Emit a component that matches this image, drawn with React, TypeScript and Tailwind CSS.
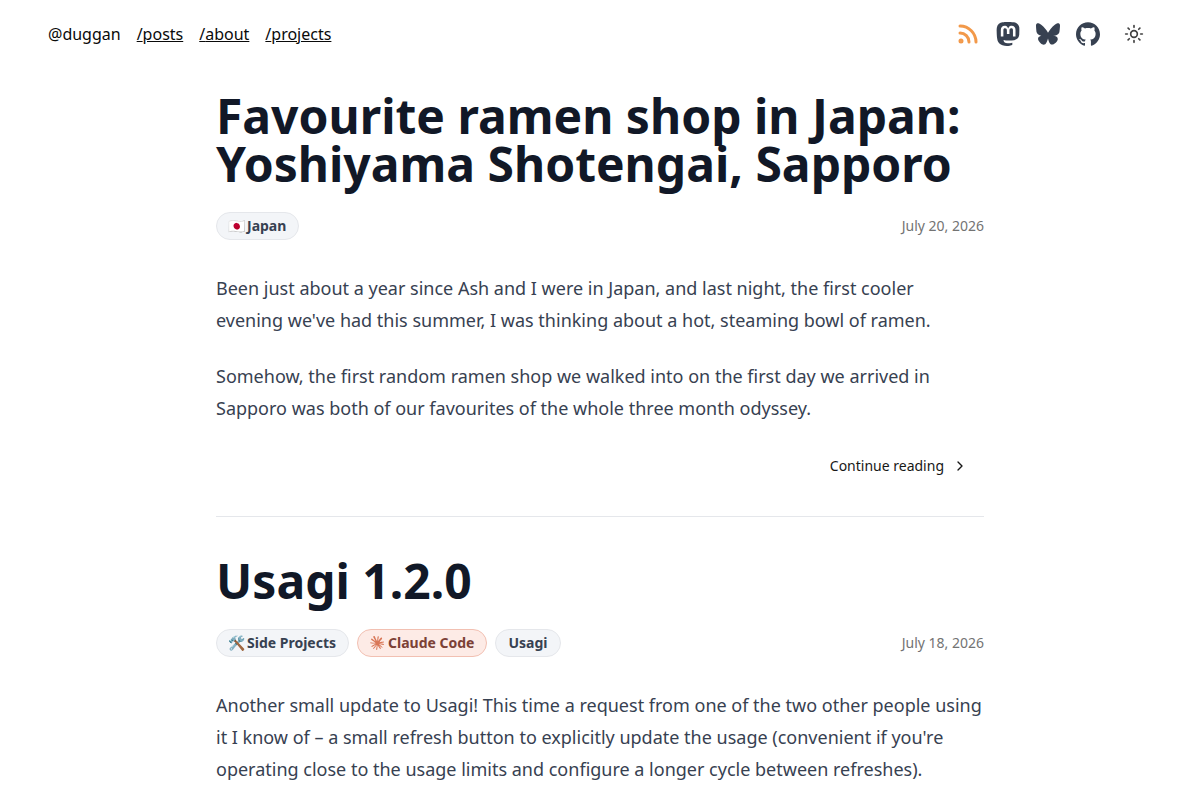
import type { ReactNode } from "react";
import { ChevronRight, Rss, Sun } from "lucide-react";
import { SiBluesky, SiClaude, SiGithub, SiMastodon } from "react-icons/si";

type TagInfo = { label: string; emoji?: string; claude?: boolean };

type Post = {
  title: string;
  date: string;
  tags: TagInfo[];
  paragraphs: string[];
  hasMore: boolean;
};

const posts: Post[] = [
  {
    title: "Favourite ramen shop in Japan: Yoshiyama Shotengai, Sapporo",
    date: "July 20, 2026",
    tags: [{ label: "Japan", emoji: "🇯🇵" }],
    paragraphs: [
      "Been just about a year since Ash and I were in Japan, and last night, the first cooler evening we've had this summer, I was thinking about a hot, steaming bowl of ramen.",
      "Somehow, the first random ramen shop we walked into on the first day we arrived in Sapporo was both of our favourites of the whole three month odyssey.",
    ],
    hasMore: true,
  },
  {
    title: "Usagi 1.2.0",
    date: "July 18, 2026",
    tags: [
      { label: "Side Projects", emoji: "🛠️" },
      { label: "Claude Code", claude: true },
      { label: "Usagi" },
    ],
    paragraphs: [
      "Another small update to Usagi! This time a request from one of the two other people using it I know of – a small refresh button to explicitly update the usage (convenient if you're operating close to the usage limits and configure a longer cycle between refreshes).",
    ],
    hasMore: false,
  },
];

function NavLink({ name }: { name: string }) {
  return (
    <a href={`/${name}`} className="underline">
      /{name}
    </a>
  );
}

function SocialLink({ label, children }: { label: string; children: ReactNode }) {
  return (
    <a href="#" aria-label={label} className="flex size-6 items-center justify-center text-[#374151]">
      {children}
    </a>
  );
}

function Tag({ tag }: { tag: TagInfo }) {
  const colors = tag.claude
    ? "border-[#f2c0b2] bg-[#fdebe6] text-[#7c4136]"
    : "border-[#e5e7eb] bg-[#f3f5f8] text-[#374151]";
  return (
    <a
      href="#"
      className={`flex h-7 items-center gap-1 rounded-full border px-3 text-sm font-bold ${colors}`}
    >
      {tag.emoji && (
        <span className="flex w-3.5 justify-center whitespace-nowrap">{tag.emoji}</span>
      )}
      {tag.claude && <SiClaude className="size-3.5 text-[#d97757]" />}
      <span>{tag.label}</span>
    </a>
  );
}

function Article({ post }: { post: Post }) {
  return (
    <article className="border-b border-[#e5e7eb] pb-8">
      <h2 className="text-5xl leading-none font-bold text-[#111827]">
        <a href="#">{post.title}</a>
      </h2>
      <div className="mt-6 flex items-center justify-between">
        <div className="flex gap-2">
          {post.tags.map((tag) => (
            <Tag key={tag.label} tag={tag} />
          ))}
        </div>
        <time className="text-sm text-[#737373]">{post.date}</time>
      </div>
      <div className="mt-8 flex flex-col gap-6 text-lg leading-8 text-[#374151]">
        {post.paragraphs.map((text) => (
          <p key={text}>{text}</p>
        ))}
      </div>
      {post.hasMore && (
        <div className="mt-6 flex justify-end">
          <a href="#" className="flex h-9 items-center gap-2 px-4 text-sm text-neutral-900">
            Continue reading
            <ChevronRight className="size-4" />
          </a>
        </div>
      )}
    </article>
  );
}

export default function App() {
  return (
    <div className="bg-white font-['Noto_Sans',sans-serif]">
      <header className="flex items-center justify-between px-12 py-4">
        <nav className="flex gap-4 text-base text-neutral-950">
          <a href="/">@duggan</a>
          <NavLink name="posts" />
          <NavLink name="about" />
          <NavLink name="projects" />
        </nav>
        <div className="flex items-center gap-4">
          <SocialLink label="RSS">
            <Rss className="size-6 text-[#f2994a] [&_circle]:fill-current" strokeWidth={3} />
          </SocialLink>
          <SocialLink label="Mastodon">
            <SiMastodon className="size-6" />
          </SocialLink>
          <SocialLink label="Bluesky">
            <SiBluesky className="size-6" />
          </SocialLink>
          <SocialLink label="GitHub">
            <SiGithub className="size-6" />
          </SocialLink>
          <button type="button" aria-label="Toggle theme" className="flex size-9 items-center justify-center text-neutral-700">
            <Sun className="size-5" />
          </button>
        </div>
      </header>
      <main className="mx-auto flex max-w-3xl flex-col gap-10 pt-6">
        {posts.map((post) => (
          <Article key={post.title} post={post} />
        ))}
      </main>
    </div>
  );
}
